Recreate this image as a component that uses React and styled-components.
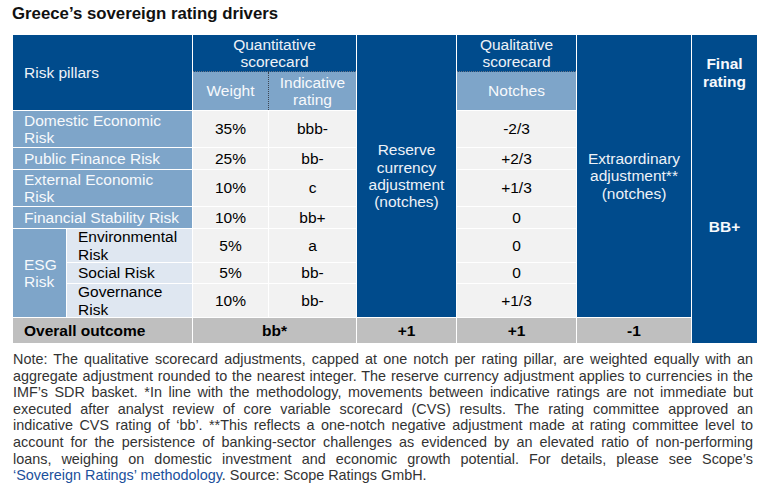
import React from "react";
import styled, { createGlobalStyle } from "styled-components";

const Global = createGlobalStyle`
  html, body { margin: 0; padding: 0; background: #fff; }
  body { font-family: "Liberation Sans", Arial, sans-serif; }
`;

const DARK = "#004b8c";
const LIGHT = "#7ea5c9";
const PALE = "#dfe7f1";
const CELL = "#f2f2f2";
const GREY = "#bfbfbf";

const Page = styled.div`
  padding: 4px 12px 0 13px;
  width: 744px;
  font-family: "Liberation Sans", Arial, sans-serif;
`;

const Title = styled.h1`
  margin: 0 0 12px -1px;
  font-size: 16.8px;
  line-height: 19px;
  font-weight: 700;
  color: #111;
`;

const Grid = styled.div`
  display: grid;
  grid-template-columns: 53px 125px 75px 87px 99px 119px 114px 65px;
  grid-template-rows: 36px 38px 36px 21px 36px 21px 33px 20px 33px 25px;
  gap: 1px;
  background: #fff;
  width: 744px;
`;

const bgMap = { dark: DARK, light: LIGHT, pale: PALE, cell: CELL, grey: GREY };
const fgMap = { dark: "#eef2f8", light: "#f7f9fc", pale: "#000", cell: "#000", grey: "#000" };

const Cell = styled.div`
  grid-column: ${(p) => p.$col};
  grid-row: ${(p) => p.$row};
  display: flex;
  align-items: center;
  justify-content: ${(p) => (p.$left ? "flex-start" : "center")};
  text-align: ${(p) => (p.$left ? "left" : "center")};
  padding: ${(p) => (p.$left ? "0 10px 0 11px" : "0 6px")};
  background: ${(p) => bgMap[p.$tone]};
  color: ${(p) => fgMap[p.$tone]};
  font-size: 15.5px;
  line-height: 17.3px;
  font-weight: ${(p) => (p.$bold ? 700 : 400)};
  box-sizing: border-box;
`;

const Group = styled.div`
  grid-column: ${(p) => p.$col};
  grid-row: 1 / 3;
  display: flex;
  flex-direction: column;
  font-size: 15.5px;
  line-height: 17.3px;
`;

const GroupTitle = styled.div`
  height: 36px;
  flex: none;
  display: flex;
  align-items: center;
  justify-content: center;
  text-align: center;
  background: ${DARK};
  color: #eef2f8;
  border-bottom: 1px dotted #6b7787;
`;

const SubRow = styled.div`
  flex: 1;
  display: grid;
  grid-template-columns: ${(p) => p.$cols};
  background: ${LIGHT};
`;

const SubCell = styled.div`
  display: flex;
  align-items: center;
  justify-content: center;
  text-align: center;
  color: #f7f9fc;
  border-right: ${(p) => (p.$divider ? "1px dotted #3c4652" : "none")};
`;

const FinalCol = styled.div`
  grid-column: 8;
  grid-row: 1 / 11;
  display: flex;
  flex-direction: column;
  background: ${DARK};
  color: #f7f9fc;
  font-weight: 700;
  font-size: 15.5px;
  line-height: 17.3px;
  text-align: center;
`;

const FinalHead = styled.div`
  height: 75px;
  display: flex;
  align-items: center;
  justify-content: center;
`;

const FinalBody = styled.div`
  flex: 1;
  display: flex;
  align-items: center;
  justify-content: center;
  padding-top: 1px;
`;

const Note = styled.div`
  margin-top: 8px;
  width: 740px;
  font-size: 14.4px;
  line-height: 16.6px;
  color: #333;
`;

const Line = styled.div`
  text-align: ${(p) => (p.$last ? "left" : "justify")};
  text-align-last: ${(p) => (p.$last ? "left" : "justify")};
  white-space: nowrap;
`;

const Link = styled.span`
  color: #1b4f9b;
`;

const rows = [
  { label: "Domestic Economic Risk", w: "35%", r: "bbb-", n: "-2/3", row: 3 },
  { label: "Public Finance Risk", w: "25%", r: "bb-", n: "+2/3", row: 4 },
  { label: "External Economic Risk", w: "10%", r: "c", n: "+1/3", row: 5 },
  { label: "Financial Stability Risk", w: "10%", r: "bb+", n: "0", row: 6 },
];

const esg = [
  { label: "Environmental Risk", w: "5%", r: "a", n: "0", row: 7 },
  { label: "Social Risk", w: "5%", r: "bb-", n: "0", row: 8 },
  { label: "Governance Risk", w: "10%", r: "bb-", n: "+1/3", row: 9 },
];

const noteLines = [
  "Note: The qualitative scorecard adjustments, capped at one notch per rating pillar, are weighted equally with an",
  "aggregate adjustment rounded to the nearest integer. The reserve currency adjustment applies to currencies in the",
  "IMF\u2019s SDR basket. *In line with the methodology, movements between indicative ratings are not immediate but",
  "executed after analyst review of core variable scorecard (CVS) results. The rating committee approved an",
  "indicative CVS rating of \u2018bb\u2019. **This reflects a one-notch negative adjustment made at rating committee level to",
  "account for the persistence of banking-sector challenges as evidenced by an elevated ratio of non-performing",
  "loans, weighing on domestic investment and economic growth potential. For details, please see Scope\u2019s",
];

export default function App() {
  return (
    <>
      <Global />
      <Page>
        <Title>Greece’s sovereign rating drivers</Title>
        <Grid>
          <Cell $col="1 / 3" $row="1 / 3" $tone="dark" $left>
            Risk pillars
          </Cell>
          <Group $col="3 / 5">
            <GroupTitle>
              Quantitative
              <br />
              scorecard
            </GroupTitle>
            <SubRow $cols="76px 87px">
              <SubCell $divider>Weight</SubCell>
              <SubCell>
                Indicative
                <br />
                rating
              </SubCell>
            </SubRow>
          </Group>
          <Cell $col="5" $row="1 / 10" $tone="dark">
            <span>
              Reserve
              <br />
              currency
              <br />
              adjustment
              <br />
              (notches)
            </span>
          </Cell>
          <Group $col="6">
            <GroupTitle>
              Qualitative
              <br />
              scorecard
            </GroupTitle>
            <SubRow $cols="1fr">
              <SubCell>Notches</SubCell>
            </SubRow>
          </Group>
          <Cell $col="7" $row="1 / 10" $tone="dark">
            <span>
              Extraordinary
              <br />
              adjustment**
              <br />
              (notches)
            </span>
          </Cell>
          <FinalCol>
            <FinalHead>
              Final
              <br />
              rating
            </FinalHead>
            <FinalBody>BB+</FinalBody>
          </FinalCol>

          {rows.map((r) => (
            <React.Fragment key={r.label}>
              <Cell $col="1 / 3" $row={r.row} $tone="light" $left>
                {r.label}
              </Cell>
              <Cell $col="3" $row={r.row} $tone="cell">
                {r.w}
              </Cell>
              <Cell $col="4" $row={r.row} $tone="cell">
                {r.r}
              </Cell>
              <Cell $col="6" $row={r.row} $tone="cell">
                {r.n}
              </Cell>
            </React.Fragment>
          ))}

          <Cell $col="1" $row="7 / 10" $tone="light" $left>
            ESG
            <br />
            Risk
          </Cell>
          {esg.map((r) => (
            <React.Fragment key={r.label}>
              <Cell $col="2" $row={r.row} $tone="pale" $left>
                {r.label}
              </Cell>
              <Cell $col="3" $row={r.row} $tone="cell">
                {r.w}
              </Cell>
              <Cell $col="4" $row={r.row} $tone="cell">
                {r.r}
              </Cell>
              <Cell $col="6" $row={r.row} $tone="cell">
                {r.n}
              </Cell>
            </React.Fragment>
          ))}

          <Cell $col="1 / 3" $row="10" $tone="grey" $left $bold>
            Overall outcome
          </Cell>
          <Cell $col="3 / 5" $row="10" $tone="grey" $bold>
            bb*
          </Cell>
          <Cell $col="5" $row="10" $tone="grey" $bold>
            +1
          </Cell>
          <Cell $col="6" $row="10" $tone="grey" $bold>
            +1
          </Cell>
          <Cell $col="7" $row="10" $tone="grey" $bold>
            -1
          </Cell>
        </Grid>
        <Note>
          {noteLines.map((l) => (
            <Line key={l}>{l}</Line>
          ))}
          <Line $last>
            <Link>‘Sovereign Ratings’ methodology</Link>. Source: Scope Ratings GmbH.
          </Line>
        </Note>
      </Page>
    </>
  );
}
